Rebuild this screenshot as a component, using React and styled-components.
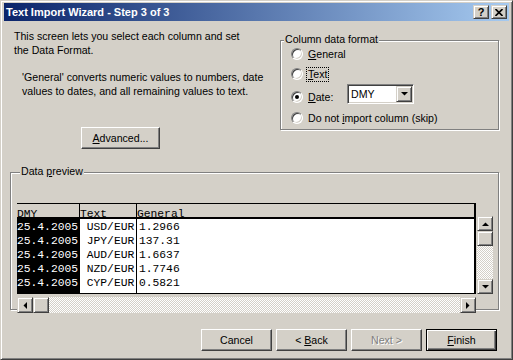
import React from "react";
import styled, { createGlobalStyle, css } from "styled-components";

const FACE = "#d4d0c8";
const UI_FONT = `"Liberation Sans", Arial, sans-serif`;
const MONO_FONT = `"Liberation Mono", "Courier New", monospace`;

const rows = [
	["25.4.2005", " USD/EUR", "1.2966"],
	["25.4.2005", " JPY/EUR", "137.31"],
	["25.4.2005", " AUD/EUR", "1.6637"],
	["25.4.2005", " NZD/EUR", "1.7746"],
	["25.4.2005", " CYP/EUR", "0.5821"],
];

const columns = [
	{ title: "DMY", width: 63, selected: true, pad: 0 },
	{ title: "Text", width: 57, pad: 0 },
	{ title: "General", pad: 2 },
];

const Arrow = ({ dir }) => {
	const shapes = {
		up: { w: 7, h: 4, points: "0,4 7,4 3.5,0.5" },
		down: { w: 7, h: 4, points: "0,0 7,0 3.5,3.5" },
		left: { w: 4, h: 7, points: "4,0 4,7 0.5,3.5" },
		right: { w: 4, h: 7, points: "0,0 0,7 3.5,3.5" },
	};
	const s = shapes[dir];
	return (
		<svg width={s.w} height={s.h} viewBox={`0 0 ${s.w} ${s.h}`}>
			<polygon points={s.points} fill="#000" />
		</svg>
	);
};

const App = () => {
	return (
		<>
			<GlobalStyle />
			<Window>
				<TitleBar>
					<Title>Text Import Wizard - Step 3 of 3</Title>
					<CaptionButtons>
						<CaptionButton>?</CaptionButton>
						<CaptionButton>
							<svg width="8" height="7" viewBox="0 0 8 7">
								<path d="M0.5 0 L7.5 7 M7.5 0 L0.5 7" stroke="#000" strokeWidth="1.6" />
							</svg>
						</CaptionButton>
					</CaptionButtons>
				</TitleBar>

				<Body>
					<TopSection>
						<LeftPane>
							<Intro>
								This screen lets you select each column and set
								<br />
								the Data Format.
							</Intro>
							<Explain>
								'General' converts numeric values to numbers, date
								<br />
								values to dates, and all remaining values to text.
							</Explain>
							<AdvancedButton>
								<U>A</U>dvanced...
							</AdvancedButton>
						</LeftPane>

						<FormatGroup>
							<Legend>Column data format</Legend>
							<OptionList>
								<Option>
									<Radio />
									<span>
										<U>G</U>eneral
									</span>
								</Option>
								<Option $gap={4}>
									<Radio />
									<FocusLabel>
										<U>T</U>ext
									</FocusLabel>
								</Option>
								<DateRow>
									<Option $gap={7}>
										<Radio $checked />
										<DateLabel>
											<U>D</U>ate:
										</DateLabel>
									</Option>
									<Combo>
										<ComboValue>DMY</ComboValue>
										<ComboButton>
											<Arrow dir="down" />
										</ComboButton>
									</Combo>
								</DateRow>
								<Option $gap={2}>
									<Radio />
									<span>
										Do not <U>i</U>mport column (skip)
									</span>
								</Option>
							</OptionList>
						</FormatGroup>
					</TopSection>

					<PreviewGroup>
						<Legend>
							Data <U>p</U>review
						</Legend>
						<GridRow>
							<Grid>
								{columns.map((col, i) => (
									<Column key={col.title} $width={col.width}>
										<HeaderCell>{col.title}</HeaderCell>
										<ColumnBody $selected={col.selected} $pad={col.pad}>
											{rows.map((r, j) => (
												<Cell key={j}>{r[i]}</Cell>
											))}
										</ColumnBody>
									</Column>
								))}
							</Grid>
							<VScroll>
								<ScrollButton $h={15}>
									<Arrow dir="up" />
								</ScrollButton>
								<ScrollButton $h={15} />
								<Track />
								<ScrollButton $h={15}>
									<Arrow dir="down" />
								</ScrollButton>
							</VScroll>
						</GridRow>
						<HScroll>
							<ScrollButton $w={16}>
								<Arrow dir="left" />
							</ScrollButton>
							<ScrollButton $w={16} />
							<Track />
							<ScrollButton $w={16}>
								<Arrow dir="right" />
							</ScrollButton>
						</HScroll>
					</PreviewGroup>

					<ButtonRow>
						<PushButton>Cancel</PushButton>
						<PushButton>
							&lt; <U>B</U>ack
						</PushButton>
						<PushButton $disabled>Next &gt;</PushButton>
						<PushButton $default>
							<U>F</U>inish
						</PushButton>
					</ButtonRow>
				</Body>
			</Window>
		</>
	);
};

export default App;

const GlobalStyle = createGlobalStyle`
	html, body {
		margin: 0;
		padding: 0;
		background: ${FACE};
	}
`;

const raisedButton = css`
	border: 1px solid;
	border-color: #fff #404040 #404040 #fff;
	box-shadow: inset -1px -1px #808080;
`;

const raisedControl = css`
	border: 1px solid;
	border-color: ${FACE} #404040 #404040 ${FACE};
	box-shadow: inset 1px 1px #fff, inset -1px -1px #808080;
`;

const Window = styled.div`
	width: 513px;
	height: 360px;
	box-sizing: border-box;
	padding: 2px 3px 3px 3px;
	border: 1px solid;
	border-color: ${FACE} #404040 #404040 ${FACE};
	box-shadow: inset 1px 1px #fff, inset -1px -1px #808080;
	background: ${FACE};
	display: flex;
	flex-direction: column;
	font-family: ${UI_FONT};
	font-size: 10.6px;
	color: #000;
`;

const TitleBar = styled.div`
	height: 18px;
	flex: none;
	display: flex;
	align-items: center;
	justify-content: space-between;
	padding: 0 2px;
	background: linear-gradient(to right, #0a246a, #a6caf0);
`;

const Title = styled.div`
	color: #fff;
	font-weight: bold;
	font-size: 11px;
	white-space: nowrap;
`;

const CaptionButtons = styled.div`
	display: flex;
	gap: 2px;
`;

const CaptionButton = styled.div`
	${raisedControl};
	width: 16px;
	height: 14px;
	box-sizing: border-box;
	background: ${FACE};
	display: flex;
	align-items: center;
	justify-content: center;
	font-weight: bold;
	font-size: 11px;
	line-height: 1;
`;

const Body = styled.div`
	flex: 1;
	display: flex;
	flex-direction: column;
	padding: 0 10px 0 6px;
`;

const TopSection = styled.div`
	height: 151px;
	flex: none;
	display: flex;
	align-items: flex-start;
`;

const LeftPane = styled.div`
	width: 270px;
	flex: none;
	padding-top: 8px;
	display: flex;
	flex-direction: column;
	align-items: flex-start;
	line-height: 14px;
	white-space: nowrap;
`;

const Intro = styled.div`
	margin-left: 4px;
`;

const Explain = styled.div`
	margin: 13px 0 0 12px;
`;

const U = styled.span`
	text-decoration: underline;
`;

const PushButton = styled.div`
	${raisedButton};
	width: 71px;
	height: 22px;
	box-sizing: border-box;
	display: flex;
	align-items: center;
	justify-content: center;
	background: ${FACE};
	white-space: pre;
	${(p) =>
		p.$disabled &&
		css`
			color: #808080;
			text-shadow: 1px 1px #fff;
		`}
	${(p) =>
		p.$default &&
		css`
			border: 1px solid #000;
			box-shadow: inset 1px 1px #fff, inset -1px -1px #404040,
				inset -2px -2px #808080;
		`}
`;

const AdvancedButton = styled(PushButton)`
	width: 79px;
	margin: 29px 0 0 71px;
`;

const GroupBox = styled.div`
	box-sizing: border-box;
	border: 1px solid #808080;
	box-shadow: inset 1px 1px #fff, 1px 1px #fff;
	flex: none;
`;

const Legend = styled.div`
	width: fit-content;
	margin: -8px 0 0 3px;
	padding: 0 1px;
	line-height: 13px;
	background: ${FACE};
	white-space: nowrap;
`;

const FormatGroup = styled(GroupBox)`
	width: 219px;
	height: 90px;
	margin-top: 19px;
`;

const OptionList = styled.div`
	display: flex;
	flex-direction: column;
	padding-left: 10px;
`;

const Option = styled.div`
	height: 16px;
	margin-top: ${(p) => p.$gap || 0}px;
	display: flex;
	align-items: center;
	gap: 5px;
	white-space: nowrap;
`;

const Radio = styled.span`
	width: 12px;
	height: 12px;
	flex: none;
	box-sizing: border-box;
	border-radius: 50%;
	border: 1px solid;
	border-color: #808080 #fff #fff #808080;
	box-shadow: inset 1px 1px #404040, inset -1px -1px ${FACE};
	background: #fff;
	display: flex;
	align-items: center;
	justify-content: center;

	&::after {
		content: "";
		width: 4px;
		height: 4px;
		border-radius: 50%;
		background: #000;
		display: ${(p) => (p.$checked ? "block" : "none")};
	}
`;

const FocusLabel = styled.span`
	margin-left: -2px;
	padding: 0 1px;
	border: 1px dotted #000;
	line-height: 13px;
`;

const DateRow = styled.div`
	height: 26px;
	display: flex;
	align-items: flex-start;
`;

const DateLabel = styled.span`
	width: 39px;
`;

const Combo = styled.div`
	width: 67px;
	height: 20px;
	margin-top: 2px;
	box-sizing: border-box;
	border: 1px solid;
	border-color: #808080 #fff #fff #808080;
	box-shadow: inset 1px 1px #404040, inset -1px -1px ${FACE};
	background: #fff;
	padding: 1px;
	display: flex;
	align-items: center;
`;

const ComboValue = styled.span`
	flex: 1;
	padding-left: 2px;
`;

const ComboButton = styled.div`
	${raisedControl};
	width: 16px;
	height: 16px;
	box-sizing: border-box;
	background: ${FACE};
	display: flex;
	align-items: center;
	justify-content: center;
`;

const PreviewGroup = styled(GroupBox)`
	height: 138px;
	padding-left: 6px;
`;

const GridRow = styled.div`
	margin-top: 25px;
	display: flex;
	align-items: flex-start;
`;

const Grid = styled.div`
	width: 459px;
	height: 91px;
	box-sizing: border-box;
	border-top: 1px solid #000;
	border-right: 2px solid #000;
	border-bottom: 1px solid #000;
	display: flex;
	font-family: ${MONO_FONT};
	font-size: 11.3px;
	overflow: hidden;
`;

const Column = styled.div`
	${(p) =>
		p.$width
			? css`
					width: ${p.$width}px;
					flex: none;
					border-right: 1px solid #000;
			  `
			: css`
					flex: 1;
			  `}
	box-sizing: border-box;
	display: flex;
	flex-direction: column;
	overflow: hidden;
`;

const HeaderCell = styled.div`
	height: 15px;
	box-sizing: border-box;
	padding-top: 4px;
	line-height: 13px;
	border-bottom: 2px solid #000;
	background: ${FACE};
	overflow: hidden;
	white-space: pre;
`;

const ColumnBody = styled.div`
	flex: 1;
	padding: 1px 0 0 ${(p) => p.$pad}px;
	background: ${(p) => (p.$selected ? "#000" : "#fff")};
	color: ${(p) => (p.$selected ? "#fff" : "#000")};
`;

const Cell = styled.div`
	height: 14px;
	line-height: 14px;
	white-space: pre;
	overflow: hidden;
`;

const VScroll = styled.div`
	width: 16px;
	height: 78px;
	margin: 13px 0 0 1px;
	display: flex;
	flex-direction: column;
`;

const HScroll = styled.div`
	width: 459px;
	height: 16px;
	margin-top: 3px;
	display: flex;
`;

const ScrollButton = styled.div`
	${raisedControl};
	flex: none;
	box-sizing: border-box;
	width: ${(p) => (p.$w ? `${p.$w}px` : "auto")};
	height: ${(p) => (p.$h ? `${p.$h}px` : "auto")};
	background: ${FACE};
	display: flex;
	align-items: center;
	justify-content: center;
`;

const Track = styled.div`
	flex: 1;
	background: repeating-conic-gradient(${FACE} 0 25%, #fff 0 50%) 0 0 / 2px 2px;
`;

const ButtonRow = styled.div`
	margin-top: 19px;
	padding-right: 2px;
	display: flex;
	justify-content: flex-end;
	gap: 4px;
`;
